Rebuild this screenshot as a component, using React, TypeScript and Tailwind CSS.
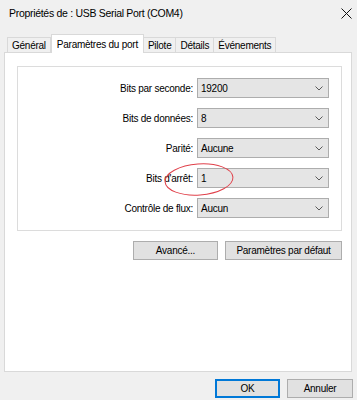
import React from 'react';

const font = { fontFamily: '"Liberation Sans", Arial, sans-serif' };

const Chevron: React.FC = () => (
  <svg width="8" height="5" viewBox="0 0 8 5" className="shrink-0">
    <path d="M0.5 0.5 L4 4 L7.5 0.5" fill="none" stroke="#5a5a5a" strokeWidth="1" />
  </svg>
);

const Combo: React.FC<{ value: string }> = ({ value }) => (
  <div className="w-[132px] h-[20px] bg-[#e5e5e5] border border-[#adadad] flex items-center justify-between pl-[3px] pr-[5px]">
    <span className="text-[10px] tracking-[-0.25px] text-black">{value}</span>
    <Chevron />
  </div>
);

const Row: React.FC<{ label: string; value: string }> = ({ label, value }) => (
  <div className="flex items-center justify-end gap-[4px]">
    <span className="text-[10px] tracking-[-0.25px] text-black">{label}</span>
    <Combo value={value} />
  </div>
);

const Btn: React.FC<{ label: string; w: string; primary?: boolean }> = ({ label, w, primary }) => (
  <button
    className={
      'h-[19px] bg-[#e1e1e1] flex items-center justify-center text-[10px] tracking-[-0.25px] text-black ' +
      w +
      (primary ? ' border-2 border-[#0078d7]' : ' border border-[#adadad]')
    }
  >
    {label}
  </button>
);

const tabs = ['Général', 'Paramètres du port', 'Pilote', 'Détails', 'Événements'];

export default function App() {
  return (
    <div className="w-[357px] h-[400px] bg-[#f0f0f0] flex flex-col relative overflow-hidden select-none" style={font}>
      {/* Title bar */}
      <div className="h-[28px] flex items-center justify-between pl-[9px] pr-[5px] pb-[1px]">
        <span className="text-[10.5px] tracking-[-0.3px] text-black">Propriétés de : USB Serial Port (COM4)</span>
        <svg width="11" height="11" viewBox="0 0 11 11">
          <path d="M0.5 0.5 L10.5 10.5 M10.5 0.5 L0.5 10.5" stroke="#111" strokeWidth="1" />
        </svg>
      </div>

      {/* Tabs */}
      <div className="h-[24px] flex items-end pl-[7px] pt-[6px]">
        {tabs.map((t, i) =>
          i === 1 ? (
            <div
              key={t}
              className="h-[19px] -mb-px bg-white border border-b-0 border-[#d9d9d9] px-[5px] flex items-start pt-[2px] text-[10px] tracking-[-0.25px] text-black relative z-10"
            >
              {t}
            </div>
          ) : (
            <div
              key={t}
              className={
                'h-[15px] bg-[#f0f0f0] border border-b-0 border-[#d9d9d9] px-[4px] flex items-center text-[10px] tracking-[-0.25px] text-black ' +
                (i === 0 ? '' : '-ml-px')
              }
            >
              {t}
            </div>
          )
        )}
      </div>

      {/* Panel */}
      <div className="ml-[4px] mr-[5px] h-[320px] bg-white border border-[#d9d9d9] pt-[13px] pl-[12px] pr-[9px]">
        <div className="h-[165px] border border-[#dcdcdc] pt-[11px] pr-[12px] flex flex-col gap-[10px]">
          <Row label="Bits par seconde:" value="19200" />
          <Row label="Bits de données:" value="8" />
          <Row label="Parité:" value="Aucune" />
          <Row label="Bits d'arrêt:" value="1" />
          <Row label="Contrôle de flux:" value="Aucun" />
        </div>
        <div className="mt-[10px] flex justify-end gap-[7px]">
          <Btn label="Avancé..." w="w-[85px]" />
          <Btn label="Paramètres par défaut" w="w-[117px]" />
        </div>
      </div>

      {/* Bottom buttons */}
      <div className="flex justify-end gap-[7px] pr-[4px] pt-[7px]">
        <Btn label="OK" w="w-[65px]" primary />
        <Btn label="Annuler" w="w-[66px]" />
      </div>

      {/* Red annotation ellipse */}
      <svg className="absolute left-0 top-0 pointer-events-none" width="357" height="400">
        <ellipse cx="199" cy="179.5" rx="34" ry="15.5" fill="none" stroke="#e0404a" strokeWidth="1" transform="rotate(-4 199 179.5)" />
      </svg>
    </div>
  );
}
